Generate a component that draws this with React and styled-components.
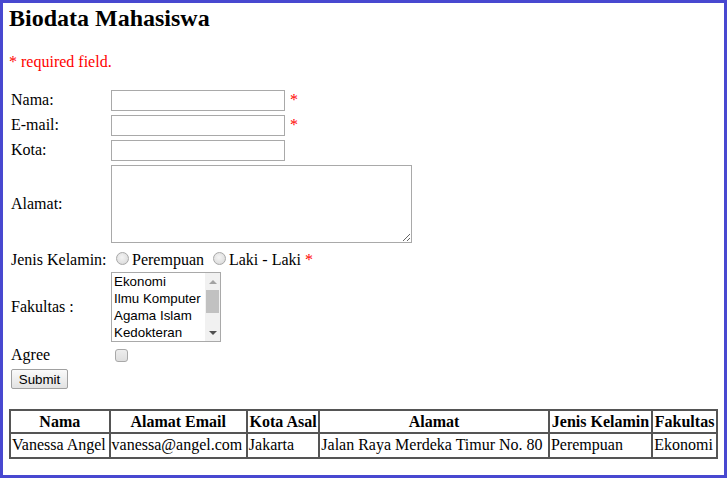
import React from "react";
import styled, { createGlobalStyle } from "styled-components";

const Global = createGlobalStyle`
  html, body { margin: 0; padding: 0; background: #fff; }
  body { font-family: "Liberation Serif", "Times New Roman", serif; font-size: 16px; color: #000; }
`;

const Frame = styled.div`
  box-sizing: border-box;
  width: 727px;
  height: 478px;
  border: 3px solid #4848d0;
  padding: 2px 6px;
  overflow: hidden;
`;

const Title = styled.h2`
  font-size: 24px;
  font-weight: bold;
  margin: 0 0 20px;
  line-height: 27.6px;
`;

const Note = styled.p`
  color: #ff0000;
  margin: 0 0 16px;
  line-height: 18.4px;
`;

const Form = styled.form`
  display: grid;
  grid-template-columns: 96px auto;
  column-gap: 4px;
  row-gap: 4px;
  padding: 3px 2px;
  align-items: center;
  justify-items: start;
`;

const Label = styled.label`
  line-height: 18.4px;
  align-self: ${(p) => (p.$end ? "end" : "center")};
  margin-bottom: ${(p) => (p.$end ? "-1px" : "0")};
`;

const Control = styled.div`
  display: flex;
  align-items: ${(p) => (p.$end ? "flex-end" : "center")};
  height: ${(p) => (p.$h ? `${p.$h}px` : "auto")};
  line-height: 18.4px;
`;

const Req = styled.span`
  color: #ff0000;
  margin-left: ${(p) => p.$ml ?? 5}px;
  margin-bottom: ${(p) => p.$mb ?? 0}px;
`;

const TextInput = styled.input`
  box-sizing: border-box;
  width: 174px;
  height: 21px;
  border: 1px solid #a9a9a9;
  padding: 1px 2px;
  font-family: "Liberation Sans", Arial, sans-serif;
  font-size: 13.33px;
  margin: 0;
`;

const Area = styled.textarea`
  box-sizing: border-box;
  width: 301px;
  height: 78px;
  border: 1px solid #a9a9a9;
  padding: 2px;
  margin: 0;
  font-family: "Liberation Mono", monospace;
  font-size: 13.33px;
`;

const Radio = styled.input`
  appearance: none;
  box-sizing: border-box;
  width: 13px;
  height: 13px;
  margin: 0 3px 3px 5px;
  border: 1px solid #a8a8a8;
  border-radius: 50%;
  background: radial-gradient(circle at 45% 40%, #f4f4f4 0%, #e2e2e2 60%, #d0d0d0 100%);
`;

const RadioText = styled.span`
  margin-right: 4px;
  margin-bottom: -1px;
`;

const ListBox = styled.div`
  box-sizing: border-box;
  display: flex;
  width: 110px;
  height: 70px;
  border: 1px solid #a9a9a9;
  background: #fff;
  font-family: "Liberation Sans", Arial, sans-serif;
  font-size: 13.33px;
  color: #000;
`;

const Options = styled.div`
  flex: 1;
  overflow: hidden;
`;

const Option = styled.div`
  padding: 0 2px;
  line-height: 17px;
  height: 17px;
  white-space: nowrap;
`;

const ScrollBar = styled.div`
  width: 15px;
  display: flex;
  flex-direction: column;
  background: #f1f1f1;
`;

const ScrollButton = styled.div`
  height: 17px;
  display: flex;
  align-items: center;
  justify-content: center;
`;

const Arrow = styled.div`
  width: 0;
  height: 0;
  border-left: 4px solid transparent;
  border-right: 4px solid transparent;
  ${(p) =>
    p.$dir === "up"
      ? "border-bottom: 4px solid #a3a3a3;"
      : "border-top: 4px solid #505050;"}
`;

const Thumb = styled.div`
  height: 23px;
  margin: 0 1px;
  background: #c1c1c1;
`;

const Track = styled.div`
  flex: 1;
`;

const Check = styled.input`
  appearance: none;
  box-sizing: border-box;
  width: 13px;
  height: 13px;
  margin: 3px 3px 3px 4px;
  border: 1px solid #a8a8a8;
  border-radius: 3px;
  background: linear-gradient(#ededed, #dedede);
`;

const Button = styled.button`
  box-sizing: border-box;
  width: 57px;
  height: 20px;
  padding: 0 6px;
  border: 1px solid #a0a0a0;
  border-radius: 2px;
  background: linear-gradient(#fafafa, #e2e2e2);
  font-family: "Liberation Sans", Arial, sans-serif;
  font-size: 13.33px;
  color: #000;
`;

const Table = styled.table`
  width: 100%;
  margin-top: 17px;
  border-collapse: separate;
  border-spacing: 0;
  border: 1px solid #555;
`;

const Th = styled.th`
  border: 1px solid #555;
  padding: 2px 1px 1px;
  font-weight: bold;
  text-align: center;
  white-space: nowrap;
  line-height: 18.4px;
`;

const Td = styled.td`
  border: 1px solid #555;
  padding: 2px 1px;
  text-align: left;
  white-space: nowrap;
  line-height: 18.4px;
`;

const headers = ["Nama", "Alamat Email", "Kota Asal", "Alamat", "Jenis Kelamin", "Fakultas"];
const row = ["Vanessa Angel", "vanessa@angel.com", "Jakarta", "Jalan Raya Merdeka Timur No. 80", "Perempuan", "Ekonomi"];
const fakultas = ["Ekonomi", "Ilmu Komputer", "Agama Islam", "Kedokteran"];

export default function App() {
  return (
    <>
      <Global />
      <Frame>
        <Title>Biodata Mahasiswa</Title>
        <Note>* required field.</Note>
        <Form onSubmit={(e) => e.preventDefault()}>
          <Label>Nama:</Label>
          <Control>
            <TextInput type="text" />
            <Req>*</Req>
          </Control>
          <Label>E-mail:</Label>
          <Control>
            <TextInput type="text" />
            <Req>*</Req>
          </Control>
          <Label>Kota:</Label>
          <Control>
            <TextInput type="text" />
          </Control>
          <Label>Alamat:</Label>
          <Control>
            <Area />
          </Control>
          <Label $end>Jenis Kelamin:</Label>
          <Control $h={21} $end>
            <Radio type="radio" name="jk" />
            <RadioText>Perempuan</RadioText>
            <Radio type="radio" name="jk" />
            <RadioText>Laki - Laki</RadioText>
            <Req $ml={0} $mb={-1}>*</Req>
          </Control>
          <Label>Fakultas :</Label>
          <Control>
            <ListBox role="listbox">
              <Options>
                {fakultas.map((f) => (
                  <Option key={f} role="option">{f}</Option>
                ))}
              </Options>
              <ScrollBar>
                <ScrollButton>
                  <Arrow $dir="up" />
                </ScrollButton>
                <Thumb />
                <Track />
                <ScrollButton>
                  <Arrow $dir="down" />
                </ScrollButton>
              </ScrollBar>
            </ListBox>
          </Control>
          <Label>Agree</Label>
          <Control>
            <Check type="checkbox" />
          </Control>
          <Button type="submit">Submit</Button>
        </Form>
        <Table>
          <thead>
            <tr>
              {headers.map((h) => (
                <Th key={h}>{h}</Th>
              ))}
            </tr>
          </thead>
          <tbody>
            <tr>
              {row.map((c) => (
                <Td key={c}>{c}</Td>
              ))}
            </tr>
          </tbody>
        </Table>
      </Frame>
    </>
  );
}
